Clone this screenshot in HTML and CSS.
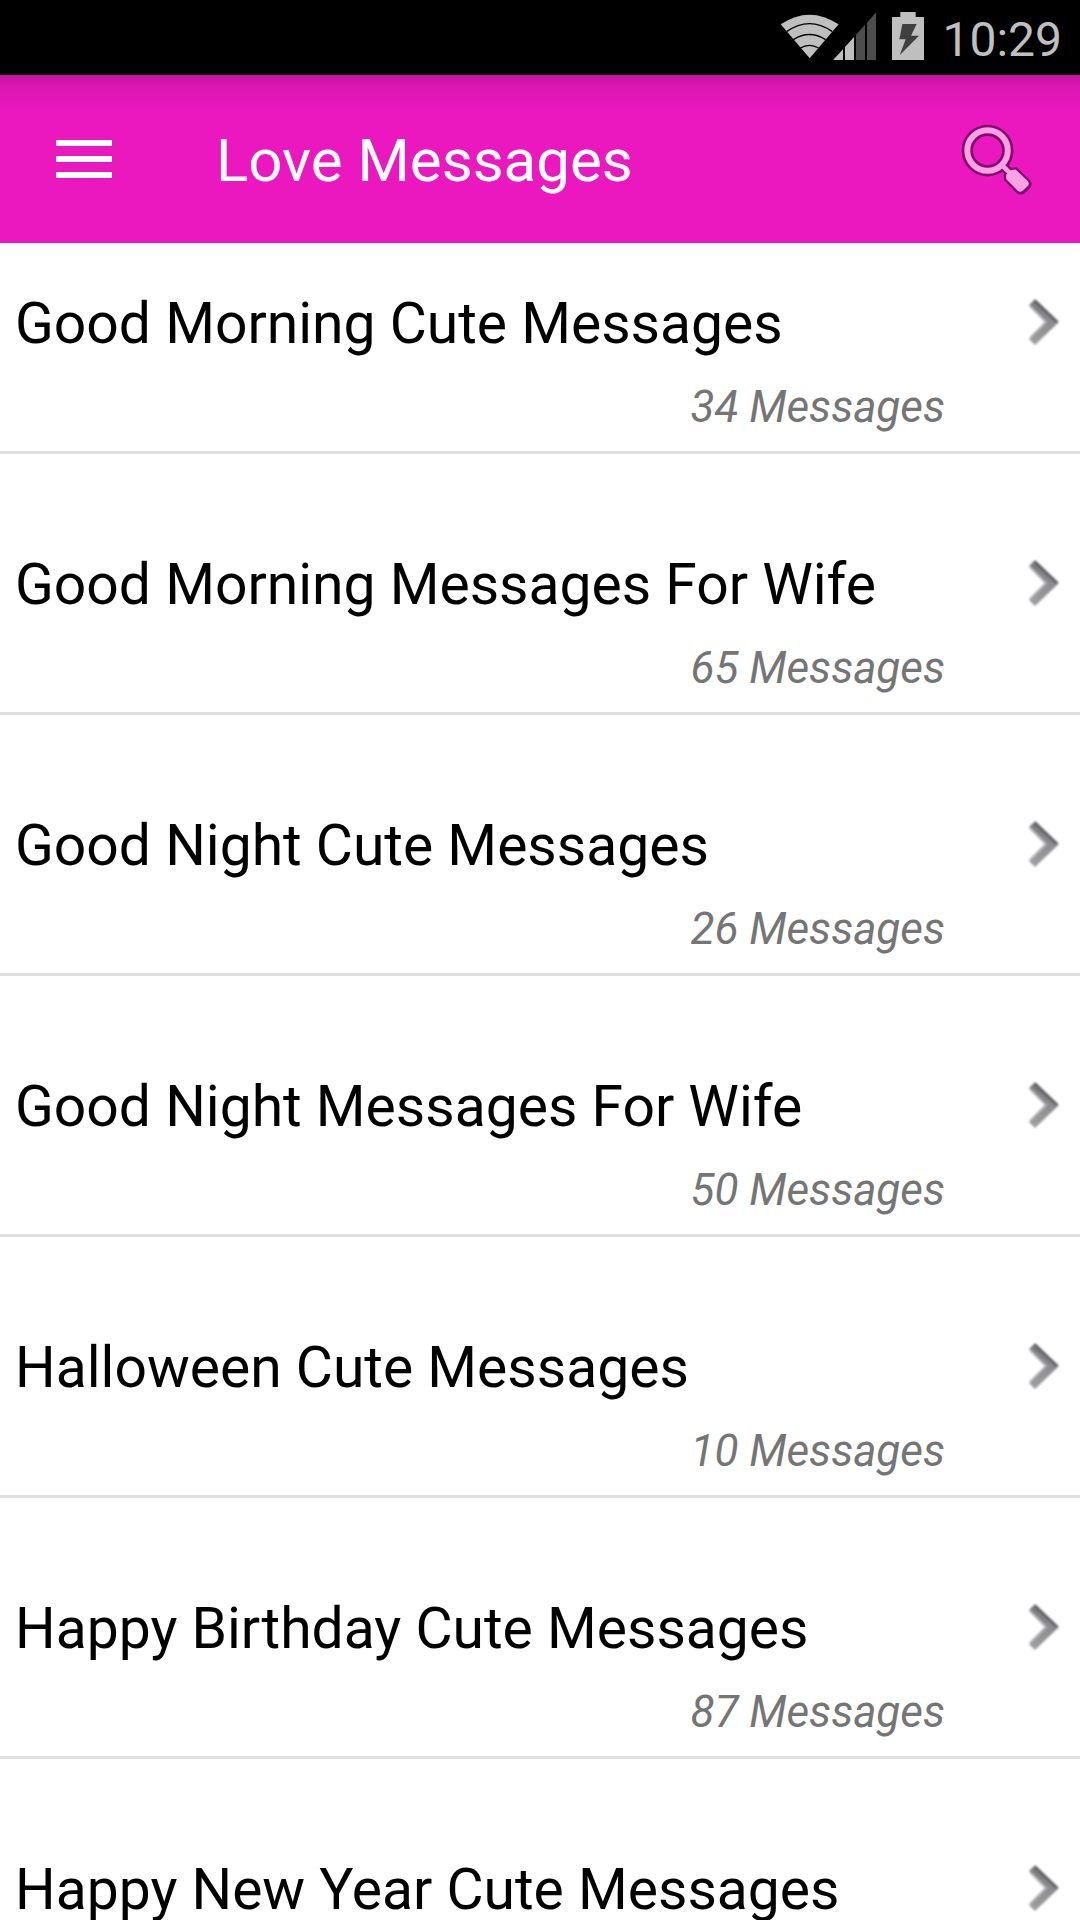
FILE: index.html
```html
<!doctype html>
<html lang="en">
    <head>
        <meta charset="UTF-8" />
        <meta name="viewport" content="width=device-width, initial-scale=1.0" />
        <title>Love Messages</title>
        <link rel="stylesheet" href="styles.css">
    </head>
    <body>
        <!-- Shared icons -->
        <svg class="defs" width="0" height="0" aria-hidden="true">
            <defs>
                <linearGradient id="chevronFill" x1="0" y1="0" x2="0" y2="1">
                    <stop offset="0" stop-color="#77777b" />
                    <stop offset="0.5" stop-color="#8c8c90" />
                    <stop offset="1" stop-color="#a0a0a2" />
                </linearGradient>
                <filter id="soften">
                    <feGaussianBlur stdDeviation="1" />
                </filter>
                <symbol id="chevron" viewBox="0 0 32 48">
                    <g filter="url(#soften)">
                        <path d="M7 1 L31 24 L7 47 L1 41 L17 24 L1 7 Z" fill="url(#chevronFill)" />
                        <path d="M7 3 L29 24" fill="none" stroke="#606064" stroke-width="3" />
                        <path d="M2 8 L18 24 L2 40" fill="none" stroke="#b4b4b8" stroke-width="2" />
                    </g>
                </symbol>
            </defs>
        </svg>

        <div class="status-bar">
            <svg class="network" viewBox="60 36 288 144" aria-hidden="true">
                <path d="M62 73 Q148 15 236 73 L149 175 Z" fill="#bfbfbf" />
                <g fill="none" stroke="#000" stroke-width="4">
                    <path d="M80 95 Q148 47 217 95" />
                    <path d="M100 119 Q148 88 197 119" />
                    <path d="M121 144 Q148 128 176 144" />
                </g>
                <path d="M219 180 L249 148 V180 Z M255 141 L282 111 V180 H255 Z" fill="#bfbfbf" />
                <path d="M288 104 L315 74 V180 H288 Z M321 68 L348 37 V180 H321 Z" fill="#4d4d4d" />
            </svg>
            <svg class="battery" viewBox="396 36 96 144" aria-hidden="true">
                <path d="M421 36 H467 V51 H492 V180 H396 V51 H421 Z" fill="#bfbfbf" />
                <path d="M427 72 H470 L453 107 H477 L419 166 L437 118 H418 Z" fill="#404040" />
            </svg>
            <span class="clock">10:29</span>
        </div>

        <header class="app-bar">
            <button class="icon-button" type="button" aria-label="Menu">
                <svg class="menu-icon" viewBox="0 0 56 38">
                    <path d="M0 0 H56 V6 H0 Z M0 16 H56 V22 H0 Z M0 32 H56 V38 H0 Z" fill="#fff" />
                </svg>
            </button>
            <h1>Love Messages</h1>
            <button class="icon-button" type="button" aria-label="Search">
                <svg class="search-icon" viewBox="62 70 212 214">
                    <g fill="none" stroke="#850b6d">
                        <circle cx="141" cy="150" r="61" stroke-width="34" />
                        <path d="M185 194 L210 219" stroke-width="28" />
                        <path d="M205 209 L226 205 L266 243 Q271 250 267 258 L250 275 Q240 281 231 274 L195 236 V223 Z" fill="#850b6d" stroke-width="10" stroke-linejoin="round" />
                    </g>
                    <circle cx="141" cy="150" r="61" fill="none" stroke="#f7a3e3" stroke-width="18" />
                    <path d="M184 193 L208 217" stroke="#f7a3e3" stroke-width="14" />
                    <path d="M213 209 L226 207 L262 242 Q268 249 263 256 L247 271 Q239 277 232 271 L197 236 V223 Z" fill="#f7a3e3" />
                </svg>
            </button>
        </header>

        <main>
            <ul class="categories">
                <li>
                    <a href="#">
                        <div class="category">
                            <div class="name">Good Morning Cute Messages</div>
                            <div class="count">34 Messages</div>
                        </div>
                        <svg class="chevron"><use href="#chevron" /></svg>
                    </a>
                </li>
                <li>
                    <a href="#">
                        <div class="category">
                            <div class="name">Good Morning Messages For Wife</div>
                            <div class="count">65 Messages</div>
                        </div>
                        <svg class="chevron"><use href="#chevron" /></svg>
                    </a>
                </li>
                <li>
                    <a href="#">
                        <div class="category">
                            <div class="name">Good Night Cute Messages</div>
                            <div class="count">26 Messages</div>
                        </div>
                        <svg class="chevron"><use href="#chevron" /></svg>
                    </a>
                </li>
                <li>
                    <a href="#">
                        <div class="category">
                            <div class="name">Good Night Messages For Wife</div>
                            <div class="count">50 Messages</div>
                        </div>
                        <svg class="chevron"><use href="#chevron" /></svg>
                    </a>
                </li>
                <li>
                    <a href="#">
                        <div class="category">
                            <div class="name">Halloween Cute Messages</div>
                            <div class="count">10 Messages</div>
                        </div>
                        <svg class="chevron"><use href="#chevron" /></svg>
                    </a>
                </li>
                <li>
                    <a href="#">
                        <div class="category">
                            <div class="name">Happy Birthday Cute Messages</div>
                            <div class="count">87 Messages</div>
                        </div>
                        <svg class="chevron"><use href="#chevron" /></svg>
                    </a>
                </li>
                <li>
                    <a href="#">
                        <div class="category">
                            <div class="name">Happy New Year Cute Messages</div>
                        </div>
                        <svg class="chevron"><use href="#chevron" /></svg>
                    </a>
                </li>
            </ul>
        </main>
    </body>
</html>
```

FILE: styles.css
```css
* {
    box-sizing: border-box;
}

body {
    margin: 0;
    height: 100vh;
    display: flex;
    flex-direction: column;
    background: #ffffff;
    font-family: Roboto, sans-serif;
    overflow: hidden;
}

svg {
    display: block;
}

.defs {
    position: absolute;
}

.status-bar {
    display: flex;
    flex: none;
    justify-content: flex-end;
    align-items: flex-start;
    gap: 16px;
    height: 75px;
    padding: 12px 18px 0 0;
    background: #000000;
}

.network {
    width: 96px;
    height: 48px;
}

.battery {
    width: 32px;
    height: 48px;
}

.clock {
    margin-left: 2px;
    color: #bfbfbf;
    font-size: 48px;
    line-height: 56px;
}

.app-bar {
    display: flex;
    flex: none;
    align-items: center;
    height: 168px;
    padding: 0 48px 0 56px;
    background: linear-gradient(#c814a1, #dc17b3 12px, #eb18bf 36px);
    color: #ffffff;
}

.app-bar h1 {
    flex: 1;
    margin: 0 0 0 104px;
    padding-top: 4px;
    font-size: 60px;
    font-weight: 400;
    line-height: 72px;
}

.icon-button {
    padding: 0;
    border: 0;
    background: none;
    cursor: pointer;
}

.menu-icon {
    width: 56px;
    height: 38px;
}

.search-icon {
    width: 71px;
    height: 71px;
}

main {
    flex: 1;
    min-height: 0;
    overflow: hidden;
}

/* first row is partly scrolled under the app bar */
.categories {
    margin: -50px 0 0;
    padding: 0;
    list-style: none;
}

.categories li {
    border-bottom: 3px solid #e0e0e0;
}

.categories a {
    display: flex;
    align-items: center;
    height: 258px;
    padding: 0 20px 0 15px;
    color: #000000;
    text-decoration: none;
}

.category {
    flex: 1;
    align-self: flex-start;
    padding-top: 97px;
}

.name {
    font-size: 57px;
    line-height: 68px;
    white-space: nowrap;
}

.count {
    margin: 22px 83px 0 0;
    color: #757575;
    font-size: 44px;
    font-style: italic;
    line-height: 54px;
    text-align: right;
}

.chevron {
    flex: none;
    width: 32px;
    height: 48px;
}
```
